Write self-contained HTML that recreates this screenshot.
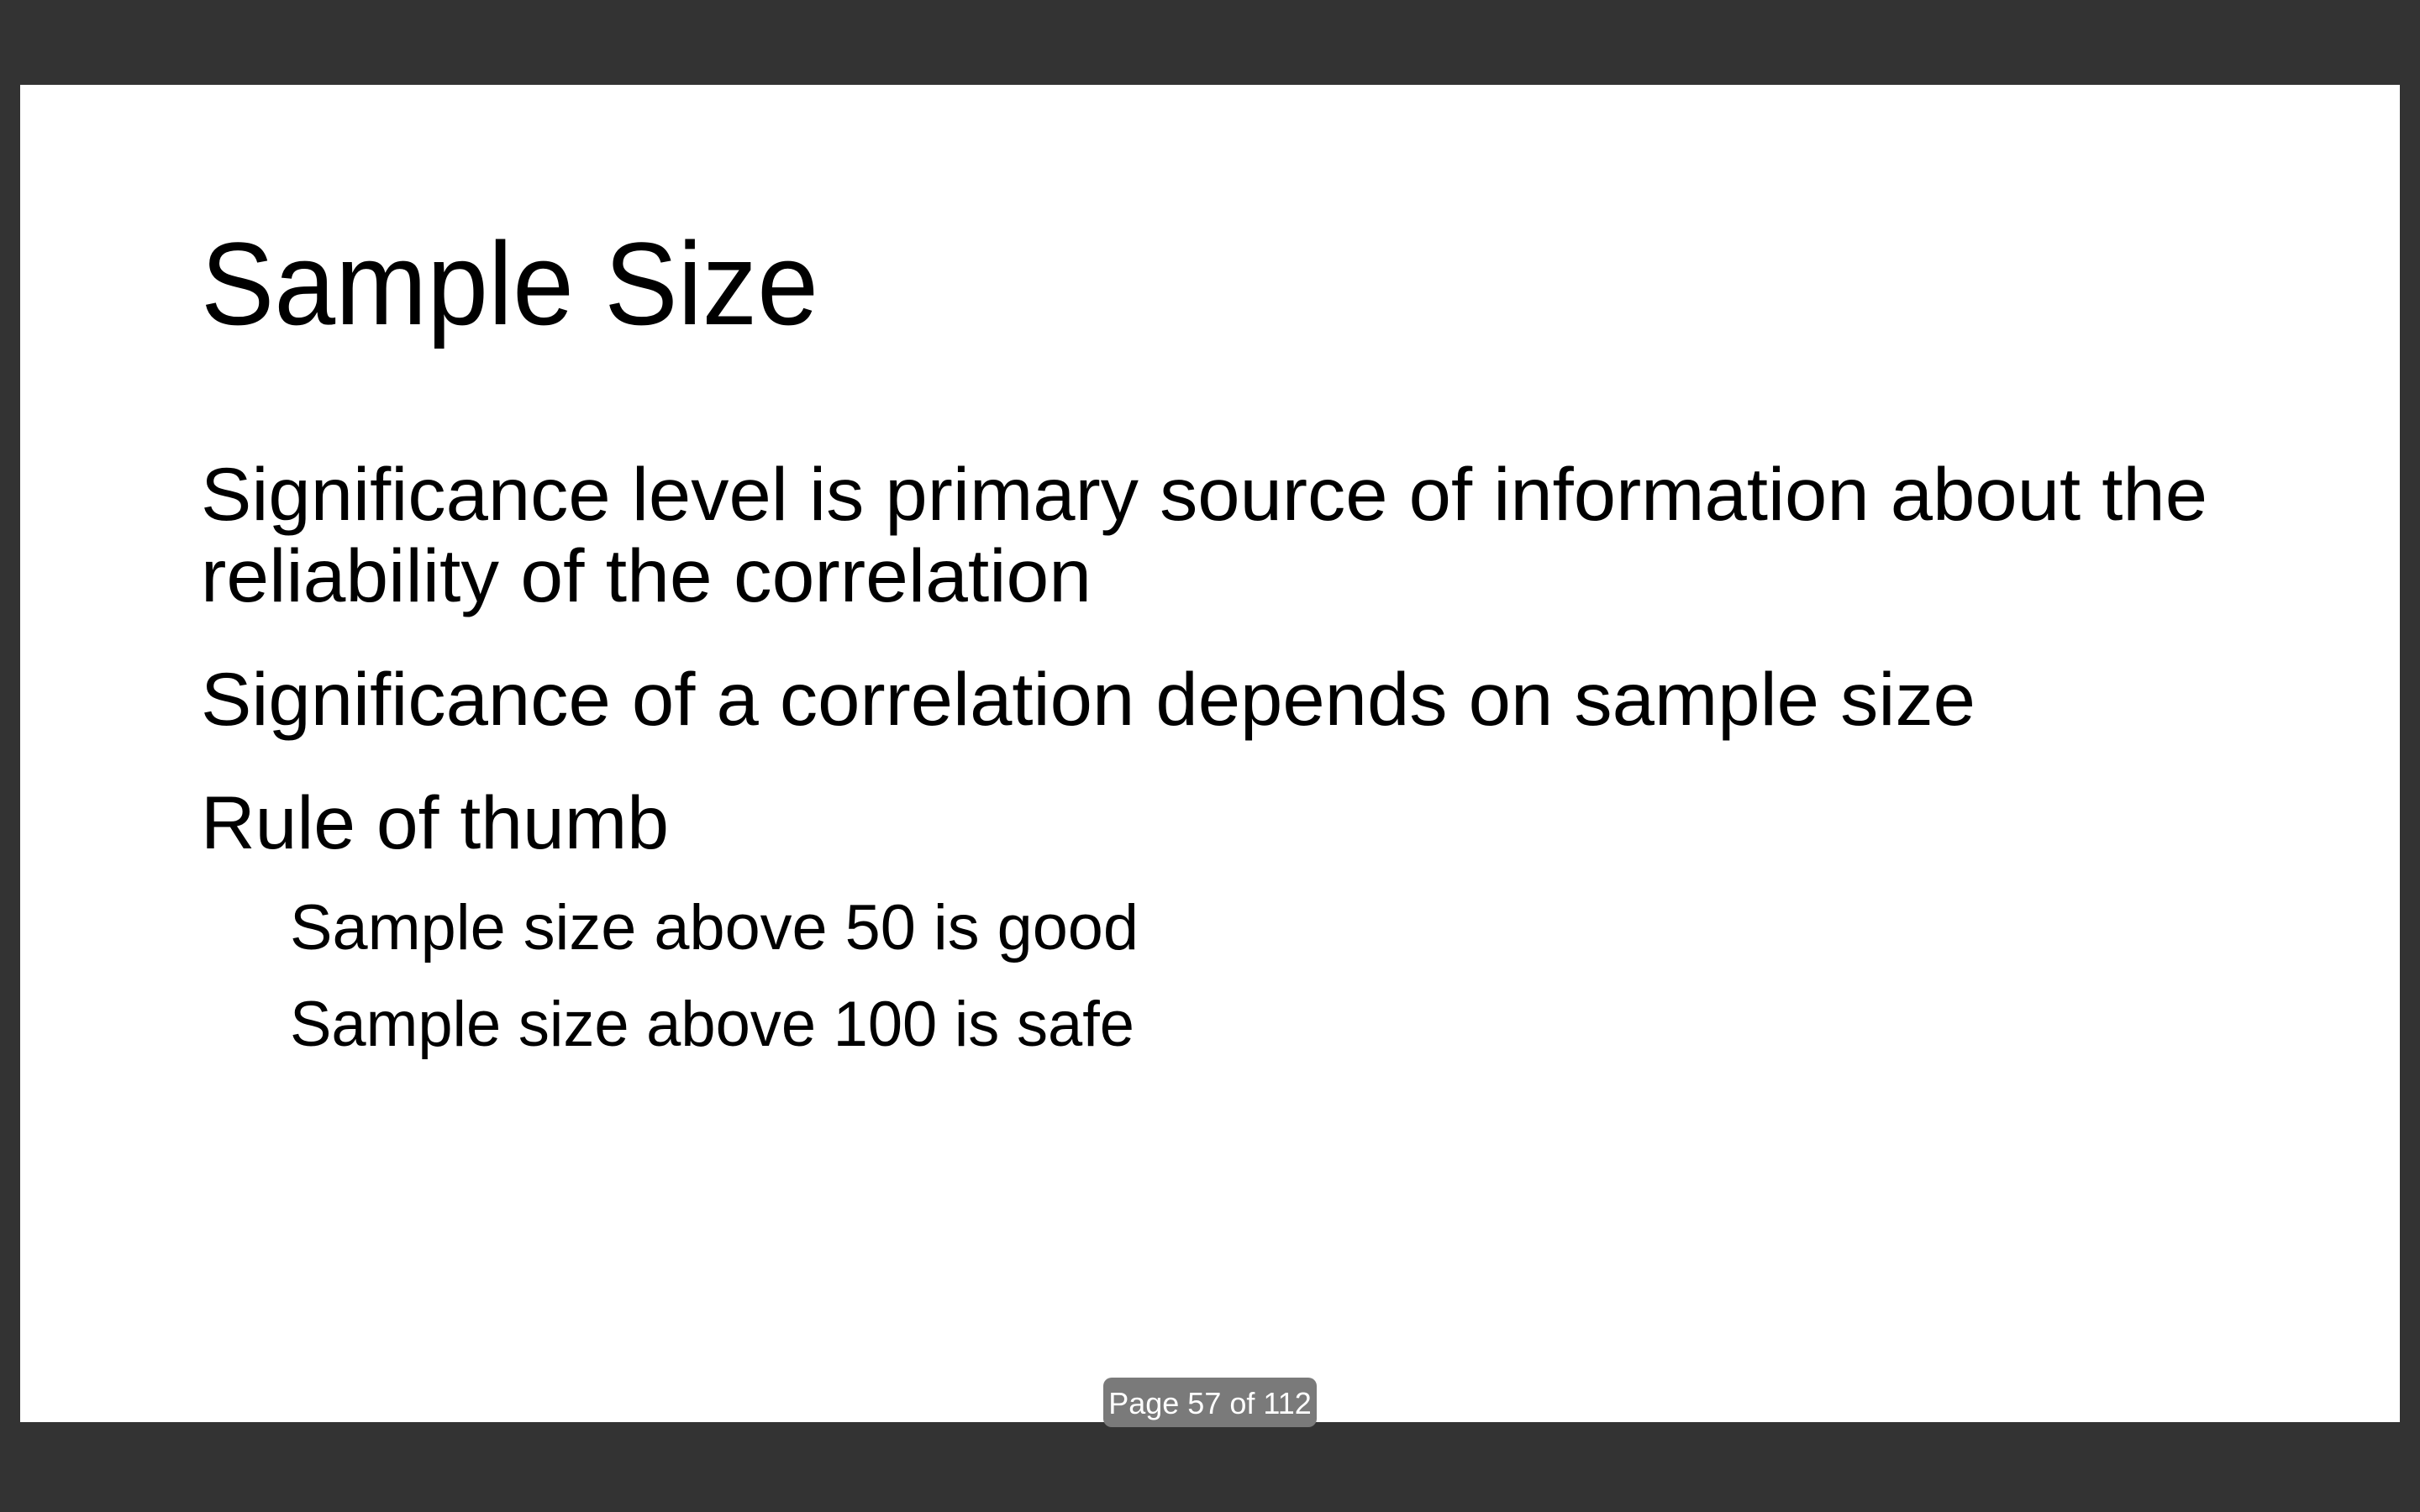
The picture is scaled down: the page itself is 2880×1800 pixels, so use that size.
<!DOCTYPE html>
<html><head><meta charset="utf-8"><style>
html,body{margin:0;padding:0;background:#333333;width:2880px;height:1800px;overflow:hidden}
svg{position:absolute;left:0;top:0}
</style></head><body>
<svg width="2880" height="1800" xmlns="http://www.w3.org/2000/svg" font-family="Liberation Sans, sans-serif" fill="#000">
<rect x="0" y="0" width="2880" height="1800" fill="#333333"/>
<rect x="24" y="101" width="2832" height="1592" fill="#ffffff"/>
<text x="239" y="386" font-size="140" textLength="735" lengthAdjust="spacingAndGlyphs">Sample Size</text>
<text x="239" y="619" font-size="89" textLength="2388" lengthAdjust="spacingAndGlyphs">Significance level is primary source of information about the</text>
<text x="239" y="716" font-size="89" textLength="1060" lengthAdjust="spacingAndGlyphs">reliability of the correlation</text>
<text x="239" y="863" font-size="89" textLength="2112" lengthAdjust="spacingAndGlyphs">Significance of a correlation depends on sample size</text>
<text x="239" y="1010" font-size="89" textLength="557" lengthAdjust="spacingAndGlyphs">Rule of thumb</text>
<text x="345" y="1130" font-size="76" textLength="1010" lengthAdjust="spacingAndGlyphs">Sample size above 50 is good</text>
<text x="345" y="1245" font-size="76" textLength="1005" lengthAdjust="spacingAndGlyphs">Sample size above 100 is safe</text>
<rect x="1313" y="1640" width="254" height="59" rx="10" fill="#7a7a7a"/>
<text x="1440" y="1683" font-size="36" fill="#ffffff" text-anchor="middle">Page 57 of 112</text>
</svg>
</body></html>
